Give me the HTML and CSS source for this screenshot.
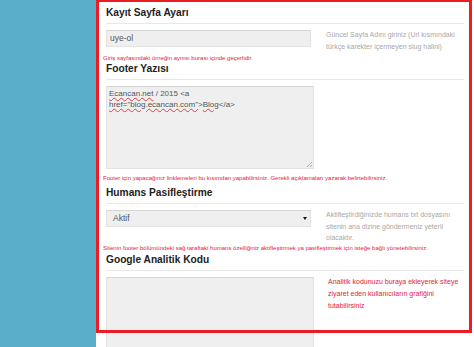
FILE: index.html
```html
<html>
<head>
<title>Site Ayarları</title>
<meta http-equiv="Content-Type" content="text/html; charset=UTF-8">
<link rel="stylesheet" href="styles.css">
</head>
<body>
<div class="page">
  <div class="sidebar"></div>
  <div class="main">

    <div class="section">
      <div class="section-title">Kayıt Sayfa Ayarı</div>
      <div class="field-row">
        <div class="field"><div class="input">uye-ol</div></div>
        <div class="field-desc">Güncel Sayfa Adını giriniz (Url kısmındaki<br>türkçe karekter içermeyen slug halini)</div>
      </div>
      <div class="field-hint">Giriş sayfasındaki örneğin aynısı burası içinde geçerlidir.</div>
    </div>

    <div class="section">
      <div class="section-title">Footer Yazısı</div>
      <div class="field-row">
        <div class="field">
          <div class="textarea">
            <span class="typo">Ecancan.net</span> / 2015 &lt;a<br><span class="typo">href="blog.ecancan.com"</span>&gt;<span class="typo">Blog</span>&lt;/a&gt;
            <svg class="grip" width="6" height="6" viewBox="0 0 6 6"><path d="M6 1L1 6M6 4L4 6" stroke="#9a9a9a" stroke-width="0.8"/></svg>
          </div>
        </div>
      </div>
      <div class="field-hint is-spaced">Footer için yapacağınız linklemeleri bu kısımdan yapabilirsiniz. Gerekli açıklamaları yazarak belirtebilirsiniz.</div>
    </div>

    <div class="section">
      <div class="section-title">Humans Pasifleştirme</div>
      <div class="field-row">
        <div class="field">
          <div class="select">Aktif<span class="caret"></span></div>
        </div>
        <div class="field-desc">Aktifleştirdiğinizde humans txt dosyasını<br>sitenin ana dizine göndermeniz yeterli<br>olacaktır.</div>
      </div>
      <div class="field-hint is-tight">Sitenin footer bölümündeki sağ taraftaki humans özelliğiniz aktifleştirmek ya pasifleştirmek için isteğe bağlı yönetebilirsiniz.</div>
    </div>

    <div class="section">
      <div class="section-title">Google Analitik Kodu</div>
      <div class="field-row">
        <div class="field"><div class="textarea is-tall"></div></div>
        <div class="field-desc is-alert">Analitik kodunuzu buraya ekleyerek siteye<br>ziyaret eden kullanıcıların grafiğini<br>tutabilirsiniz</div>
      </div>
    </div>

  </div>
  <div class="highlight"></div>
</div>
</body>
</html>
```

FILE: styles.css
```css
body {
 margin: 0;
 font-family: "Liberation Sans", Arial, sans-serif;
 background-color: #ffffff;
}
.page {
 position: relative;
 display: flex;
 height: 347px;
 overflow: hidden;
}
.sidebar {
 width: 96px;
 flex: none;
 background-color: #5aaec9;
}
.main {
 flex: 1;
 padding: 6px 10px 0 7px;
}
.section-title {
 margin-left: 3px;
 font-size: 10.2px;
 font-weight: bold;
 line-height: 14px;
 padding-bottom: 3px;
 color: #222222;
 border-bottom: 1px solid #e8e8e8;
}
.field-row {
 display: flex;
 gap: 12px;
 margin: 6px 0 0 3px;
}
.field {
 width: 208px;
 flex: none;
}
.input, .select {
 box-sizing: border-box;
 width: 205px;
 height: 17px;
 padding: 0 3px;
 font-size: 8.5px;
 line-height: 15px;
 color: #555555;
 background-color: #efefef;
 border: 1px solid #e2e2e2;
 border-top-color: #d6d6d6;
}
.select {
 display: flex;
 align-items: center;
 justify-content: space-between;
 padding: 0 3px 0 6px;
}
.caret {
 width: 0;
 height: 0;
 border-left: 2px solid transparent;
 border-right: 2px solid transparent;
 border-top: 3px solid #111111;
}
.textarea {
 position: relative;
 box-sizing: border-box;
 width: 208px;
 height: 83px;
 padding: 2px 2px;
 font-size: 8px;
 line-height: 10.5px;
 color: #555555;
 background-color: #efefef;
 border: 1px solid #e2e2e2;
 border-top-color: #d6d6d6;
}
.textarea.is-tall {
 height: 90px;
}
.typo {
 text-decoration: underline wavy #e04040;
 text-decoration-thickness: 0.6px;
}
.grip {
 position: absolute;
 right: 1px;
 bottom: 1px;
}
.field-desc {
 margin-top: -1px;
 font-size: 7px;
 line-height: 11.5px;
 color: #a8a8a8;
}
.field-desc.is-alert {
 margin-left: 2px;
 line-height: 12px;
 color: #e2233d;
}
.field-hint {
 margin-top: 2px;
 font-size: 6px;
 line-height: 8px;
 color: #e2233d;
}
.field-hint.is-spaced {
 margin: 5px 0 4px;
}
.field-hint.is-tight {
 margin: 0 0 1px;
}
.highlight {
 position: absolute;
 left: 96px;
 top: -1px;
 width: 376px;
 height: 334px;
 box-sizing: border-box;
 border: 3px solid #ec1c24;
}
```
